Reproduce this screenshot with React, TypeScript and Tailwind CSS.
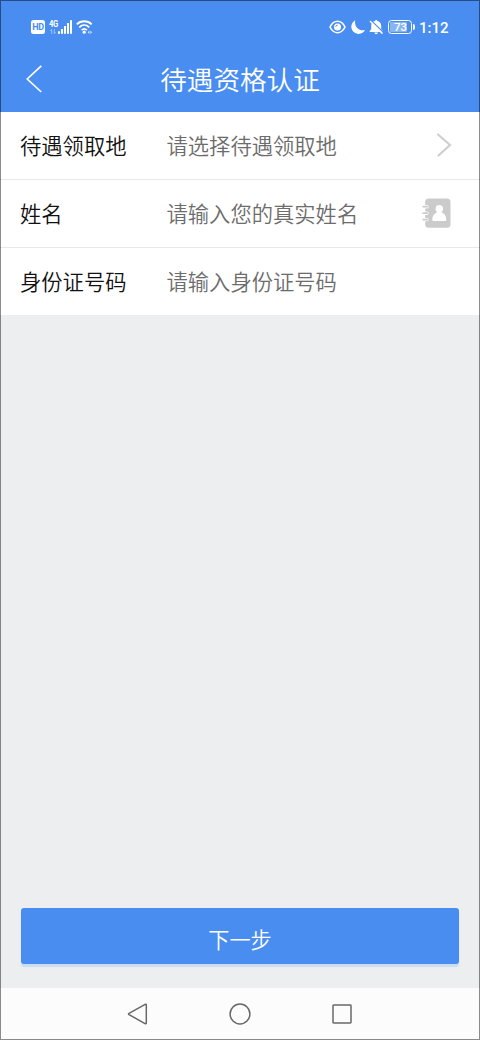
import type { ReactNode } from "react";

const fields: { label: string; placeholder: string; icon?: ReactNode }[] = [
  {
    label: "待遇领取地",
    placeholder: "请选择待遇领取地",
    icon: <ChevronIcon />,
  },
  {
    label: "姓名",
    placeholder: "请输入您的真实姓名",
    icon: <ContactIcon />,
  },
  {
    label: "身份证号码",
    placeholder: "请输入身份证号码",
  },
];

function ChevronIcon() {
  return (
    <svg className="w-4 h-6 mr-[7px] mb-[2px]" viewBox="0 0 16 24" fill="none">
      <path d="M2 1.5 14 12 2.5 22.5" stroke="#cfcfcf" strokeWidth="2.2" strokeLinecap="round" />
    </svg>
  );
}

function ContactIcon() {
  return (
    <svg className="w-[29px] h-[30px] mr-[8px] mb-[2px]" viewBox="0 0 29 30" fill="none">
      <rect x="3.2" y="0.4" width="25.3" height="29.4" rx="3.5" fill="#cbcbcb" />
      <path d="M3 8.7h2M3 15.2h2M3 21.6h2" stroke="#fff" strokeWidth="3.4" strokeLinecap="round" />
      <path d="M1.2 8.7h4M1.2 15.2h4M1.2 21.6h4" stroke="#cbcbcb" strokeWidth="1.7" strokeLinecap="round" />
      <path
        d="M17.3 7a3.8 3.8 0 0 1 3.8 3.8c0 1.5-.7 2.6-1.6 3.4 3 1.1 4.9 4 4.9 7.500 0 .8-.4 1.200-1.200 1.200H11.400c-.8 0-1.200-.4-1.200-1.200 0-3.500 1.900-6.400 4.900-7.500-.9-.8-1.600-1.900-1.600-3.400A3.800 3.800 0 0 1 17.300 7Z"
        fill="#fff"
      />
    </svg>
  );
}

const SignalIcon = () => (
  <svg className="w-[15px] h-[14px]" viewBox="0 0 15 14" fill="white">
    <rect x="0" y="11.3" width="2" height="2.5" />
    <rect x="3" y="9" width="2" height="4.8" />
    <rect x="6" y="6" width="2" height="7.8" />
    <rect x="9" y="3" width="2" height="10.8" />
    <rect x="12" y="0.2" width="2" height="13.6" />
  </svg>
);

const WifiIcon = () => (
  <svg className="w-[17px] h-[14px] ml-[3px]" viewBox="0 0 17 14" fill="none" stroke="white">
    <path d="M.8 4.3C5 .2 11.5.2 15.7 4.3" strokeWidth="1.8" />
    <path d="M3.3 7.3c2.900-2.800 7-2.800 9.900 0" strokeWidth="1.8" />
    <path d="M5.6 10.2c1.600-1.500 3.700-1.500 5.300 0" strokeWidth="1.7" />
    <circle cx="8.2" cy="12.2" r="1.6" fill="white" stroke="none" />
    <path d="m13.4 10.5-1.800 1.700 1.800 1.700ZM14.4 10.5l1.600 1.700-1.600 1.700Z" fill="white" stroke="none" opacity=".8" />
  </svg>
);

const EyeIcon = () => (
  <svg className="w-[17px] h-[14px]" viewBox="0 0 17 14" fill="none">
    <path d="M1 7c3.700-7.600 11.300-7.600 15 0-3.700 7.600-11.300 7.600-15 0Z" stroke="white" strokeWidth="1.6" strokeLinejoin="round" />
    <circle cx="8.5" cy="7" r="3.5" fill="white" />
    <path d="M6.700 6.800a1.800 1.800 0 0 1 1.800-1.600" stroke="#488def" strokeWidth="1" />
  </svg>
);

const MoonIcon = () => (
  <svg className="w-[14px] h-[14px] ml-[5px]" viewBox="0 0 14 14" fill="white">
    <path d="M4.300.3A7.200 7.200 0 1 0 14 9.900C8.500 11.800 2.700 6.500 4.300.3Z" />
  </svg>
);

const BellOffIcon = () => (
  <svg className="w-[15px] h-[15px] ml-[4px]" viewBox="0 0 15 15" fill="white">
    <path d="M7.200 0c.7 0 1.100.5 1.100 1.100 2.500.5 3.900 2.400 3.900 4.700v3.400l1.700 1.900v.9H.7v-.9l1.500-1.900V5.800c0-2.300 1.400-4.200 3.900-4.700C6.100.5 6.500 0 7.200 0Z" />
    <path d="M5.500 12.500h3.400c0 1-.7 1.700-1.700 1.700s-1.700-.7-1.700-1.700Z" />
    <path d="M2 .6 14.400 12.500" stroke="#488def" strokeWidth="1.4" />
    <path d="M1 1 13.500 13.600" stroke="white" strokeWidth="1.5" />
  </svg>
);

const StatusBar = () => (
  <div className="h-12 pt-[20px] pl-[31px] pr-[31px] flex items-start justify-between text-white">
    <div className="flex items-start">
      <div className="w-[14px] h-[14px] rounded-[2.5px] bg-white text-[#488def] text-[9px] leading-[15px] font-bold text-center tracking-[-0.3px]">
        HD
      </div>
      <div className="w-[9px] h-[14px] ml-[4px]">
        <div className="w-[13px] origin-left scale-x-85 text-[9px] leading-[8px] font-bold tracking-[-0.6px]">4G</div>
        <svg className="w-[6px] h-[5px] mt-px ml-px" viewBox="0 0 6 5" fill="none" stroke="white" strokeWidth=".8" opacity=".6">
          <path d="M.3 1.7 1.7.4V5M5.7 3.3 4.3 4.6V0" />
        </svg>
      </div>
      <SignalIcon />
      <WifiIcon />
    </div>
    <div className="flex items-start">
      <EyeIcon />
      <MoonIcon />
      <BellOffIcon />
      <div className="flex items-center ml-[4px]">
        <div className="w-[24px] h-[14px] p-px rounded-[3.5px] border border-white">
          <div className="w-[17px] h-[10px] rounded-[1px] bg-white/35 pl-[4px] text-[11.5px] leading-[11px] font-medium">73</div>
        </div>
        <div className="w-[2px] h-[6px] ml-px rounded-r-sm bg-white" />
      </div>
      <div className="w-[30px] ml-[4px] text-[15px] leading-[16px] font-medium whitespace-nowrap">1:12</div>
    </div>
  </div>
);

const Header = () => (
  <div className="relative h-16 flex items-center justify-center pt-[3px]">
    <svg className="absolute left-[26px] top-[17px] w-4 h-7" viewBox="0 0 16 28" fill="none">
      <path d="M15.300.8 1.200 14l14.100 13" stroke="white" strokeWidth="1.7" />
    </svg>
    <h1 className="text-[26.6px] leading-none font-[350] text-white">待遇资格认证</h1>
  </div>
);

const NavBar = () => (
  <div className="h-[52px] bg-[#fcfcfc] flex items-center justify-center gap-[80px]">
    <svg className="w-[22px] h-[22px]" viewBox="0 0 22 22" fill="none" stroke="#686868" strokeWidth="1.5">
      <path d="M18.600 1.200 19.300 1.700v18.600l-.8.500L1.600 11.400v-.7Z" strokeLinejoin="round" />
    </svg>
    <svg className="w-[22px] h-[22px]" viewBox="0 0 22 22" fill="none" stroke="#686868" strokeWidth="1.5">
      <circle cx="11" cy="11" r="9.9" />
    </svg>
    <svg className="w-[22px] h-[22px]" viewBox="0 0 22 22" fill="none" stroke="#686868" strokeWidth="1.5">
      <rect x="2" y="2" width="18" height="18" rx=".7" />
    </svg>
  </div>
);

export default function App() {
  return (
    <div className="relative w-[480px] h-[1040px] flex flex-col bg-[#edeef0] overflow-hidden font-['Roboto','Noto_Sans_CJK_SC',sans-serif]">
      <div className="bg-[#488def]">
        <StatusBar />
        <Header />
      </div>

      <div className="bg-white divide-y divide-[#e8e8e8]">
        {fields.map((field) => (
          <div key={field.label} className="h-[68px] last:h-[67px] pl-[20px] pr-[21px] flex items-center text-[21.3px] leading-none">
            <span className="w-[146.5px] pt-[3px] font-[350] text-[#111]">{field.label}</span>
            <span className="flex-1 pt-[3px] font-[350] text-[#6c6c6c]">{field.placeholder}</span>
            {field.icon}
          </div>
        ))}
      </div>

      <div className="flex-1 flex flex-col justify-end px-[21px] pb-6">
        <button className="h-[56px] pt-[9px] rounded-[3px] bg-[#488def] text-white text-[21.2px] leading-none font-[350] shadow-[0_3px_1px_#c9dcf1]">
          下一步
        </button>
      </div>

      <NavBar />

      {/* frame line over the whole screen */}
      <div className="absolute inset-0 border border-black/45 pointer-events-none" />
    </div>
  );
}
